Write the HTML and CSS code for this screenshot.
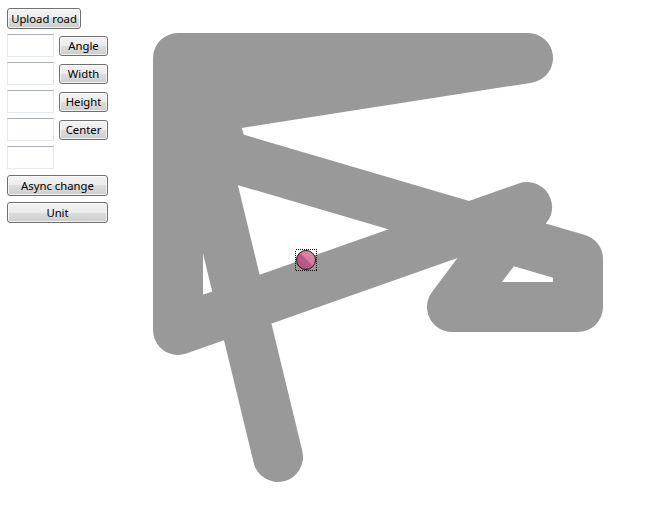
FILE: index.html
```html
<!DOCTYPE html>
<html>
<head>
<meta charset="utf-8">
<link rel="stylesheet" href="styles.css">
</head>
<body>
<div class="app">
  <div class="panel">
    <button class="btn btn-upload">Upload road</button>
    <div class="row"><input class="tb" type="text"><button class="btn btn-small">Angle</button></div>
    <div class="row"><input class="tb" type="text"><button class="btn btn-small">Width</button></div>
    <div class="row"><input class="tb" type="text"><button class="btn btn-small">Height</button></div>
    <div class="row"><input class="tb" type="text"><button class="btn btn-small">Center</button></div>
    <div class="row"><input class="tb" type="text"></div>
    <button class="btn btn-wide btn-async">Async change</button>
    <button class="btn btn-wide">Unit</button>
  </div>
  <div class="canvas">
    <svg class="board" viewBox="120 0 547 527" width="547" height="527">
      <defs>
        <linearGradient id="pink" x1="0" y1="1" x2="1" y2="0">
          <stop offset="0" stop-color="#b0537c"/>
          <stop offset="0.52" stop-color="#b65c84"/>
          <stop offset="0.53" stop-color="#d77a9f"/>
          <stop offset="1" stop-color="#e390b0"/>
        </linearGradient>
      </defs>
      <path class="road" d="M278,457 L194,110 L528,58 L178,58 L178,330 L527,207 L452,307 L578,307 L578,259 L224,155 L209,107"/>
      <rect class="focus" x="295.5" y="249.5" width="21" height="21"/>
      <circle class="marker" cx="306" cy="260" r="9.5"/>
    </svg>
  </div>
</div>
</body>
</html>
```

FILE: styles.css
```css
html, body {
  margin: 0;
  padding: 0;
  background: #ffffff;
}
body {
  font-family: "Segoe UI", "Noto Sans", "Open Sans", sans-serif;
  font-size: 11.3px;
  color: #000;
}
.app {
  display: grid;
  grid-template-columns: 120px 547px;
  width: 667px;
  height: 527px;
  overflow: hidden;
}
.panel {
  display: flex;
  flex-direction: column;
  align-items: flex-start;
  padding: 8px 0 0 7px;
  gap: 5px;
}
.row {
  display: flex;
  align-items: center;
  gap: 5px;
  height: 23px;
}
.btn {
  font-family: inherit;
  font-size: 11.3px;
  color: #000;
  margin: 0;
  padding: 0;
  height: 21px;
  border: 1px solid #707070;
  border-radius: 3px;
  background: linear-gradient(to bottom, #f3f3f3 0%, #ebebeb 50%, #dddddd 50%, #cdcdcd 100%);
  box-shadow: inset 0 0 0 1px rgba(255,255,255,0.7);
  line-height: 17px;
  text-align: center;
  white-space: nowrap;
}
.btn-upload {
  width: 74px;
}
.btn-small {
  width: 49px;
  height: 20px;
}
.btn-wide {
  width: 101px;
  margin-top: 1px;
}
.tb {
  box-sizing: border-box;
  width: 47px;
  height: 23px;
  margin: 0;
  padding: 0;
  border: 1px solid #e3e9ef;
  border-top-color: #abadb3;
  background: #fff;
}
.canvas {
  position: relative;
}
.board {
  display: block;
}
.road {
  fill: none;
  stroke: #999999;
  stroke-width: 50;
  stroke-linecap: round;
  stroke-linejoin: round;
}
.focus {
  fill: none;
  stroke: #000;
  stroke-width: 1;
  stroke-dasharray: 1 1;
  shape-rendering: crispEdges;
}
.marker {
  fill: url(#pink);
  stroke: #1a1a1a;
  stroke-width: 1;
}
```
